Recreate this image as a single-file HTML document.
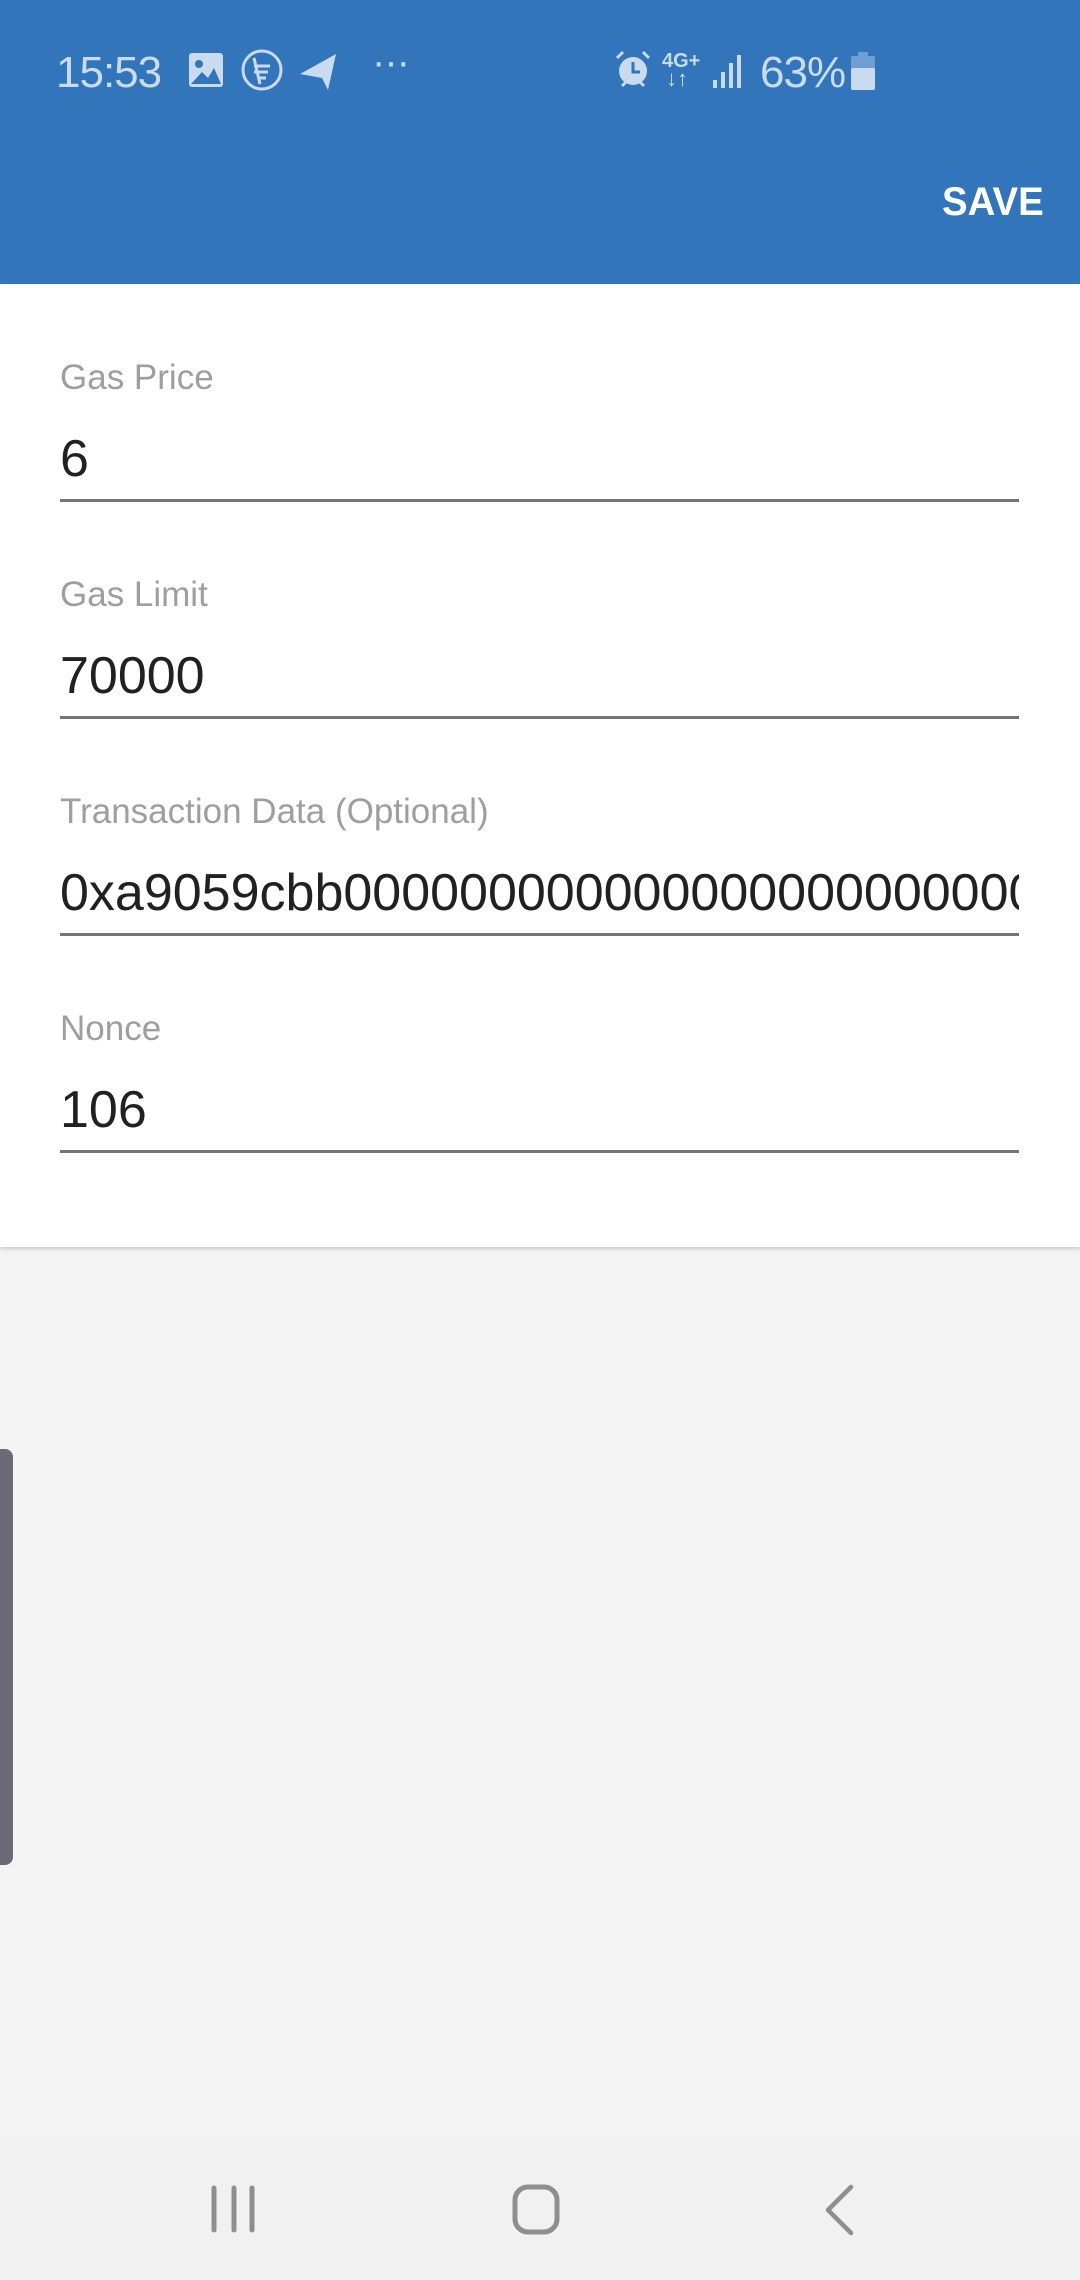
<!DOCTYPE html>
<html><head><meta charset="utf-8"><style>
*{margin:0;padding:0;box-sizing:border-box}
body{width:1080px;height:2280px;background:#f4f4f4;font-family:"Liberation Sans",sans-serif;position:relative;overflow:hidden}
.bar{position:absolute;left:0;top:0;width:1080px;height:284px;background:#3275ba}
.st{position:absolute;color:#c9dbef;font-size:44px;top:48px;letter-spacing:-1px}
.save{position:absolute;left:942px;top:180px;color:#fff;font-size:40px;font-weight:bold;transform:scaleX(0.96);transform-origin:left}
.card{position:absolute;left:0;top:284px;width:1080px;height:963px;background:#fff;box-shadow:0 2px 4px rgba(0,0,0,0.18)}
.lbl{position:absolute;left:60px;color:#9e9e9e;font-size:35px}
.val{position:absolute;left:60px;width:959px;overflow:hidden;white-space:nowrap;color:#212121;font-size:52px}
.ln{position:absolute;left:60px;width:959px;height:3px;background:#757575}
.tab{position:absolute;left:-8px;top:1449px;width:21px;height:416px;background:#6b6878;border-radius:8px}
.nav{position:absolute;left:0;top:2136px;width:1080px;height:144px;background:#f1f1f1}
</style></head><body>
<div class="bar"></div>
<div class="st" style="left:56px">15:53</div>
<svg style="position:absolute;left:188px;top:52px" width="36" height="36" viewBox="0 0 36 36"><rect x="1" y="1" width="34" height="34" rx="3" fill="#c9dbef"/><circle cx="11" cy="12" r="4" fill="#3275ba"/><path d="M3 32 L14 20 L20 26 L26 16 L33 32Z" fill="#3275ba"/></svg>
<svg style="position:absolute;left:240px;top:48px" width="44" height="44" viewBox="0 0 44 44" fill="none" stroke="#c9dbef" stroke-width="3"><circle cx="22" cy="22" r="19"/><path d="M14 18h16M14 24h14M18 30h8M14 10l6 26"/></svg>
<svg style="position:absolute;left:298px;top:52px" width="42" height="40" viewBox="0 0 42 40"><path d="M2 22 L38 2 L30 38 L24 26Z" fill="#c9dbef"/></svg>
<div class="st" style="left:372px;top:40px;font-size:40px">···</div>
<svg style="position:absolute;left:614px;top:50px" width="38" height="40" viewBox="0 0 38 40"><circle cx="19" cy="21" r="14" fill="#c9dbef"/><path d="M19 12v10h7" stroke="#3275ba" stroke-width="3" fill="none"/><path d="M3 8l6-6M35 8l-6-6M8 36l4-4M30 36l-4-4" stroke="#c9dbef" stroke-width="3"/></svg>
<div style="position:absolute;left:662px;top:50px;color:#c9dbef;font-size:20px;font-weight:bold">4G+</div>
<div style="position:absolute;left:666px;top:66px;color:#c9dbef;font-size:22px;font-weight:bold">↓↑</div>
<svg style="position:absolute;left:712px;top:54px" width="32" height="34" viewBox="0 0 32 34" fill="#c9dbef"><rect x="1" y="26" width="4" height="8"/><rect x="9" y="18" width="4" height="16"/><rect x="17" y="9" width="4" height="25"/><rect x="25" y="1" width="4" height="33"/></svg>
<div class="st" style="left:760px">63%</div>
<svg style="position:absolute;left:850px;top:52px" width="26" height="38" viewBox="0 0 26 38"><rect x="8" y="0" width="10" height="4" fill="#6f9ed2"/><rect x="1" y="4" width="24" height="34" rx="2" fill="#6f9ed2"/><rect x="1" y="16" width="24" height="22" rx="2" fill="#c9dbef"/></svg>
<div class="save">SAVE</div>
<div class="card"></div>
<div class="lbl" style="top:358px">Gas Price</div>
<div class="val" style="top:429px">6</div>
<div class="ln" style="top:499px"></div>
<div class="lbl" style="top:575px">Gas Limit</div>
<div class="val" style="top:646px">70000</div>
<div class="ln" style="top:716px"></div>
<div class="lbl" style="top:792px">Transaction Data (Optional)</div>
<div class="val" style="top:863px">0xa9059cbb0000000000000000000000000000</div>
<div class="ln" style="top:933px"></div>
<div class="lbl" style="top:1009px">Nonce</div>
<div class="val" style="top:1080px">106</div>
<div class="ln" style="top:1150px"></div>
<div class="tab"></div>
<div class="nav"></div>
<svg style="position:absolute;left:205px;top:2185px" width="60" height="50" viewBox="0 0 60 50" stroke="#8e8e8e" stroke-width="5" stroke-linecap="round"><path d="M9 3v42M29 3v42M47 3v42"/></svg>
<svg style="position:absolute;left:510px;top:2183px" width="52" height="54" viewBox="0 0 52 54"><rect x="5" y="4" width="42" height="45" rx="13" fill="none" stroke="#8e8e8e" stroke-width="5"/></svg>
<svg style="position:absolute;left:820px;top:2184px" width="40" height="52" viewBox="0 0 40 52"><path d="M31 3 L8 26 L31 49" fill="none" stroke="#8e8e8e" stroke-width="4.5" stroke-linecap="round" stroke-linejoin="round"/></svg>
</body></html>
